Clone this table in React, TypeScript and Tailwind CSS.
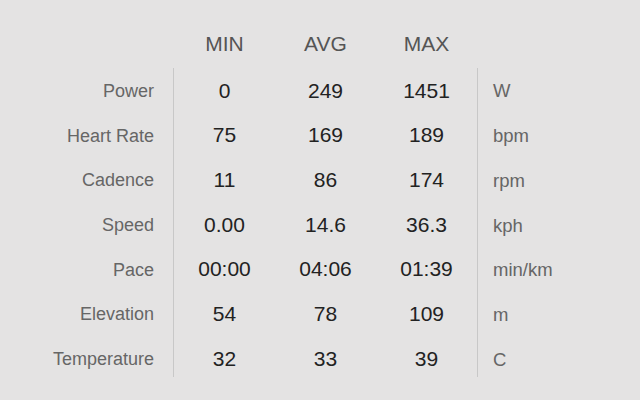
import React from "react";

const rows = [
  { label: "Power", min: "0", avg: "249", max: "1451", unit: "W" },
  { label: "Heart Rate", min: "75", avg: "169", max: "189", unit: "bpm" },
  { label: "Cadence", min: "11", avg: "86", max: "174", unit: "rpm" },
  { label: "Speed", min: "0.00", avg: "14.6", max: "36.3", unit: "kph" },
  { label: "Pace", min: "00:00", avg: "04:06", max: "01:39", unit: "min/km" },
  { label: "Elevation", min: "54", avg: "78", max: "109", unit: "m" },
  { label: "Temperature", min: "32", avg: "33", max: "39", unit: "C" },
];

export default function App() {
  return (
    <div
      className="w-[640px] h-[400px] bg-[#e4e3e3] overflow-hidden"
      style={{ fontFamily: '"Liberation Sans", Arial, sans-serif' }}
    >
      <div className="flex h-[68px] pt-[20px] items-center text-[21px] text-[#555]">
        <div className="w-[174px]" />
        <div className="w-[101px] text-center">MIN</div>
        <div className="w-[101px] text-center">AVG</div>
        <div className="w-[101px] text-center">MAX</div>
      </div>
      <div className="flex">
        <div className="w-[173px] pr-[19px] flex flex-col text-right text-[18px] text-[#666]">
          {rows.map((r) => (
            <div key={r.label} className="h-[44.7px] pt-[2px] flex items-center justify-end">
              {r.label}
            </div>
          ))}
        </div>
        <div className="h-[309px] border-x border-[#c8c8c8] flex text-[21px] text-[#222]">
          {(["min", "avg", "max"] as const).map((k) => (
            <div key={k} className="w-[101px] flex flex-col">
              {rows.map((r) => (
                <div key={r.label} className="h-[44.7px] flex items-center justify-center shrink-0">
                  {r[k]}
                </div>
              ))}
            </div>
          ))}
        </div>
        <div className="pl-[15px] flex flex-col text-[18.5px] text-[#666]">
          {rows.map((r) => (
            <div key={r.label} className="h-[44.7px] pt-[2px] flex items-center">
              {r.unit}
            </div>
          ))}
        </div>
      </div>
    </div>
  );
}
